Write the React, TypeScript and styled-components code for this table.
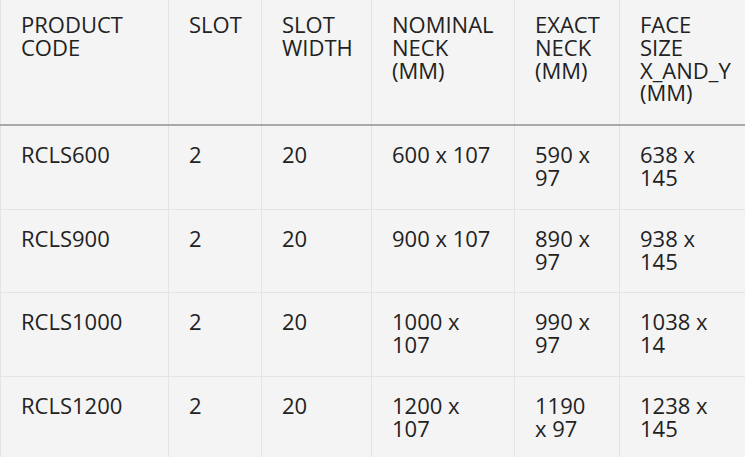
import React from "react";
import styled, { createGlobalStyle } from "styled-components";

const GlobalStyle = createGlobalStyle`
  html, body {
    margin: 0;
    padding: 0;
    background: #f4f4f4;
    overflow: hidden;
  }
  body {
    font-family: "Open Sans", "Liberation Sans", sans-serif;
    color: #222222;
  }
`;

const Wrapper = styled.div`
  width: 753px;
  background: #f4f4f4;
`;

const Table = styled.table`
  width: 753px;
  table-layout: fixed;
  border-collapse: collapse;
  font-family: "Open Sans", "Liberation Sans", sans-serif;
  font-size: 22px;
  line-height: 22.8px;
  color: #222222;
`;

const HeadCell = styled.th<{ $w: number }>`
  width: ${(p) => p.$w}px;
  box-sizing: border-box;
  text-align: left;
  vertical-align: top;
  font-weight: 400;
  padding: 13px 18px 20px 20px;
  border-left: 1px solid #e4e4e4;
  border-bottom: 2px solid #a9a9a9;
`;

const Cell = styled.td`
  vertical-align: top;
  padding: 17px 18px 20px 20px;
  border-left: 1px solid #e4e4e4;
  border-bottom: 1px solid #e4e4e4;
`;

const columns: { label: string; w: number }[] = [
  { label: "PRODUCT CODE", w: 168 },
  { label: "SLOT", w: 93 },
  { label: "SLOT WIDTH", w: 110 },
  { label: "NOMINAL NECK (MM)", w: 143 },
  { label: "EXACT NECK (MM)", w: 105 },
  { label: "FACE SIZE X_AND_Y (MM)", w: 134 },
];

const rows: string[][] = [
  ["RCLS600", "2", "20", "600 x 107", "590 x 97", "638 x 145"],
  ["RCLS900", "2", "20", "900 x 107", "890 x 97", "938 x 145"],
  ["RCLS1000", "2", "20", "1000 x 107", "990 x 97", "1038 x 14"],
  ["RCLS1200", "2", "20", "1200 x 107", "1190 x 97", "1238 x 145"],
];

export default function App() {
  return (
    <Wrapper>
      <GlobalStyle />
      <Table>
        <thead>
          <tr>
            {columns.map((c) => (
              <HeadCell key={c.label} $w={c.w}>
                {c.label}
              </HeadCell>
            ))}
          </tr>
        </thead>
        <tbody>
          {rows.map((r) => (
            <tr key={r[0]}>
              {r.map((v, i) => (
                <Cell key={i}>{v}</Cell>
              ))}
            </tr>
          ))}
        </tbody>
      </Table>
    </Wrapper>
  );
}
